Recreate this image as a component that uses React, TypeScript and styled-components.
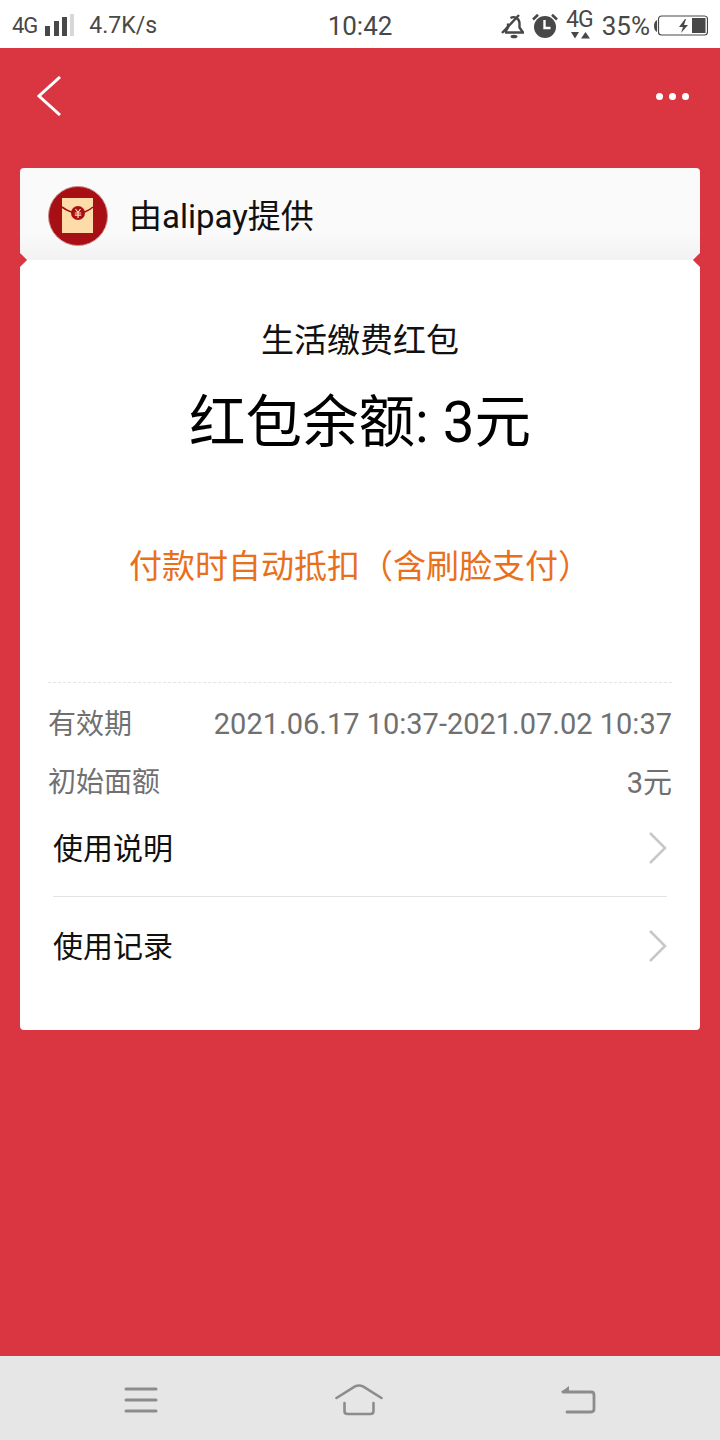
import React from 'react';
import styled, { createGlobalStyle } from 'styled-components';

const RED = '#d93641';

const GlobalStyle = createGlobalStyle`
  html, body {
    margin: 0;
    padding: 0;
    background: ${RED};
    font-family: "Roboto", "Noto Sans CJK SC", sans-serif;
  }
`;

const Page = styled.div`
  width: 720px;
  height: 1440px;
  display: flex;
  flex-direction: column;
  overflow: hidden;
`;

const StatusBar = styled.div`
  height: 48px;
  box-sizing: border-box;
  flex-shrink: 0;
  background: #fff;
  display: grid;
  grid-template-columns: 1fr auto 1fr;
  align-items: center;
  padding: 3px 12px 0;
  color: #484848;
`;

const StatusGroup = styled.div<{ $end?: boolean }>`
  display: flex;
  align-items: center;
  justify-content: ${(p) => (p.$end ? 'flex-end' : 'flex-start')};
  gap: ${(p) => (p.$end ? '8px' : '0')};
`;

const NetLabel = styled.span`
  font-size: 22px;
  letter-spacing: -1px;
  margin-right: 7px;
`;

const Speed = styled.span`
  font-size: 23px;
  margin-left: 15px;
`;

const Clock = styled.span`
  font-size: 26px;
`;

const Percent = styled.span`
  font-size: 26px;
  margin-right: -4px;
`;

const Main = styled.div`
  flex: 1;
  display: flex;
  flex-direction: column;
  background: ${RED};
`;

const NavBar = styled.div`
  height: 120px;
  display: flex;
  justify-content: space-between;
  align-items: flex-start;
  padding: 28px 31px 0 37px;
  box-sizing: border-box;
`;

const Dots = styled.div`
  display: flex;
  gap: 6px;
  margin-top: 17px;
`;

const Dot = styled.span`
  width: 7px;
  height: 7px;
  border-radius: 50%;
  background: #fff;
`;

const Card = styled.div`
  margin: 0 20px;
  border-radius: 4px;
  overflow: hidden;
  position: relative;
`;

const Provider = styled.div`
  height: 92px;
  box-sizing: border-box;
  background: linear-gradient(#fafafa 70%, #f2f2f2 100%);
  display: flex;
  align-items: center;
  gap: 21px;
  padding: 4px 28px 0;
`;

const ProviderName = styled.span`
  font-size: 33px;
  line-height: 44px;
  margin-top: 1px;
  color: #111;
`;

const Notch = styled.span<{ $side: 'left' | 'right' }>`
  position: absolute;
  top: 87px;
  ${(p) => p.$side}: -5px;
  width: 10px;
  height: 10px;
  background: ${RED};
  transform: rotate(45deg);
`;

const Body = styled.div`
  background: #fff;
  height: 770px;
  box-sizing: border-box;
  padding: 58px 28px 0;
  display: flex;
  flex-direction: column;
`;

const Title = styled.div`
  font-size: 33px;
  line-height: 46px;
  text-align: center;
  color: #111;
`;

const Balance = styled.div`
  font-size: 56.5px;
  line-height: 72px;
  margin-top: 23px;
  text-align: center;
  color: #000;
`;

const Notice = styled.div`
  font-size: 33px;
  line-height: 46px;
  margin-top: 85px;
  text-align: center;
  color: #e8701c;
`;

const DetailList = styled.div`
  margin-top: 92px;
  border-top: 1px dashed #e4e4e4;
  padding-top: 22px;
  display: flex;
  flex-direction: column;
  gap: 20px;
`;

const DetailRow = styled.div`
  display: flex;
  justify-content: space-between;
  align-items: center;
  height: 38px;
  color: #707070;
`;

const DetailLabel = styled.span`
  font-size: 28px;
  margin-bottom: 4px;
`;

const DetailValue = styled.span<{ $cjk?: boolean }>`
  font-size: 29px;
  margin-bottom: ${(p) => (p.$cjk ? '4px' : '0')};
`;

const Links = styled.div`
  display: flex;
  flex-direction: column;
`;

const LinkRow = styled.div<{ $divided?: boolean }>`
  height: ${(p) => (p.$divided ? '100px' : '95px')};
  margin: 0 5px;
  box-sizing: border-box;
  display: flex;
  align-items: center;
  justify-content: space-between;
  font-size: 30px;
  color: #111;
  border-top: ${(p) => (p.$divided ? '1px solid #e2e2e2' : 'none')};
`;

const LinkLabel = styled.span`
  margin-bottom: 6px;
`;

const LinkArrow = styled.span`
  display: flex;
  margin-bottom: 2px;
`;

const BottomBar = styled.div`
  height: 84px;
  box-sizing: border-box;
  flex-shrink: 0;
  background: #e6e6e6;
  display: flex;
  align-items: center;
  justify-content: space-between;
  padding: 4px 124px 0;
`;

const SignalIcon = () => (
  <svg width="30" height="24" viewBox="0 0 30 24" fill="#484848">
    <rect x="1" y="12" width="5" height="10" />
    <rect x="10" y="7" width="5" height="15" />
    <rect x="18" y="3" width="5" height="19" />
    <rect x="26" y="0" width="4" height="22" fill="#d8d8d8" />
  </svg>
);

const MuteBellIcon = () => (
  <svg width="24" height="26" viewBox="0 0 24 26" fill="none" stroke="#484848" strokeWidth="2.4">
    <path d="M5 19.500h18l-3.500-5V10a6 6 0 0 0-9-5M8 10.500v4L5 19.500" />
    <path d="M2 20 19 2" />
    <ellipse cx="14" cy="23.500" rx="3.500" ry="1.800" fill="#484848" stroke="none" />
  </svg>
);

const AlarmIcon = () => (
  <svg width="26" height="26" viewBox="0 0 26 26">
    <circle cx="13" cy="14" r="11" fill="#484848" />
    <path d="M12.500 7v8h6" fill="none" stroke="#fff" strokeWidth="2.400" />
    <path d="M1 6.500 6 1.800M25 6.500 20 1.800" stroke="#484848" strokeWidth="2.600" />
  </svg>
);

const Net4gIcon = () => (
  <svg width="28" height="38" viewBox="0 0 28 38">
    <text x="0" y="20" fontSize="23" letterSpacing="-1" fontFamily="Roboto, sans-serif" fill="#484848">4G</text>
    <path d="M5 25h8l-4 6.500zM15 31.500h9l-4.500-6.500z" fill="#484848" />
  </svg>
);

const BatteryIcon = () => (
  <svg width="54" height="22" viewBox="0 0 54 22">
    <path d="M0 11c0-3 1-5 3-6v12c-2-1-3-3-3-6z" fill="#484848" />
    <rect x="4.500" y="1" width="49" height="19" rx="3" fill="none" stroke="#484848" strokeWidth="1.200" />
    <rect x="38" y="3" width="13.500" height="15" fill="#484848" />
    <path d="M31 4l-6 8h4l-2 6 7-8h-4l2-6z" fill="#484848" />
  </svg>
);

const BackIcon = () => (
  <svg width="24" height="40" viewBox="0 0 24 40" fill="none" stroke="#fff" strokeWidth="3">
    <path d="M23 1 2 20l21 19" />
  </svg>
);

const ForwardIcon = () => (
  <svg width="18" height="32" viewBox="0 0 18 32" fill="none" stroke="#c8c8c8" strokeWidth="2.600">
    <path d="M1 1l15 15L1 31" />
  </svg>
);

const PacketIcon = () => (
  <svg width="60" height="60" viewBox="0 0 60 60">
    <circle cx="30" cy="30" r="29.500" fill="#a80f14" stroke="#c98a8a" strokeWidth="1" />
    <rect x="14" y="12" width="31" height="35" fill="#fddcaa" />
    <path d="M14 21 Q22 27 30 27 Q38 27 45 21" fill="none" stroke="#a80f14" strokeWidth="1.600" />
    <circle cx="30" cy="27" r="7" fill="#a80f14" />
    <path d="M27.500 23 30 26.500l2.500-3.500M26.800 27h6.400M26.800 29.200h6.400M30 26.500v5.500" fill="none" stroke="#fddcaa" strokeWidth="1.200" />
  </svg>
);

const MenuIcon = () => (
  <svg width="34" height="26" viewBox="0 0 34 26" stroke="#8c8c8c" strokeWidth="3" strokeLinecap="round">
    <path d="M2 2h30M2 13h30M2 24h30" />
  </svg>
);

const HomeIcon = () => (
  <svg width="48" height="32" viewBox="0 0 48 32" fill="none" stroke="#8c8c8c" strokeWidth="2.600" strokeLinecap="round">
    <path d="M1.500 14 20 2.400q4-1.800 8 0L46.500 14" />
    <path d="M9.500 19v8q0 3 3 3h23q3 0 3-3v-8" />
  </svg>
);

const ReturnIcon = () => (
  <svg width="36" height="30" viewBox="0 0 36 30" fill="none" stroke="#8c8c8c" strokeWidth="2.800" strokeLinecap="round">
    <path d="M3 7h28q3 0 3 3v14q0 3-3 3H7" />
    <path d="M1 7l8-6v6z" fill="#8c8c8c" stroke="none" />
  </svg>
);

export default function App() {
  return (
    <Page>
      <GlobalStyle />
      <StatusBar>
        <StatusGroup>
          <NetLabel>4G</NetLabel>
          <SignalIcon />
          <Speed>4.7K/s</Speed>
        </StatusGroup>
        <Clock>10:42</Clock>
        <StatusGroup $end>
          <MuteBellIcon />
          <AlarmIcon />
          <Net4gIcon />
          <Percent>35%</Percent>
          <BatteryIcon />
        </StatusGroup>
      </StatusBar>

      <Main>
        <NavBar>
          <BackIcon />
          <Dots>
            <Dot />
            <Dot />
            <Dot />
          </Dots>
        </NavBar>

        <Card>
          <Provider>
            <PacketIcon />
            <ProviderName>由alipay提供</ProviderName>
          </Provider>
          <Notch $side="left" />
          <Notch $side="right" />
          <Body>
            <Title>生活缴费红包</Title>
            <Balance>红包余额: 3元</Balance>
            <Notice>付款时自动抵扣（含刷脸支付）</Notice>
            <DetailList>
              <DetailRow>
                <DetailLabel>有效期</DetailLabel>
                <DetailValue>2021.06.17 10:37-2021.07.02 10:37</DetailValue>
              </DetailRow>
              <DetailRow>
                <DetailLabel>初始面额</DetailLabel>
                <DetailValue $cjk>3元</DetailValue>
              </DetailRow>
            </DetailList>
            <Links>
              <LinkRow>
                <LinkLabel>使用说明</LinkLabel>
                <LinkArrow>
                  <ForwardIcon />
                </LinkArrow>
              </LinkRow>
              <LinkRow $divided>
                <LinkLabel>使用记录</LinkLabel>
                <LinkArrow>
                  <ForwardIcon />
                </LinkArrow>
              </LinkRow>
            </Links>
          </Body>
        </Card>
      </Main>

      <BottomBar>
        <MenuIcon />
        <HomeIcon />
        <ReturnIcon />
      </BottomBar>
    </Page>
  );
}
